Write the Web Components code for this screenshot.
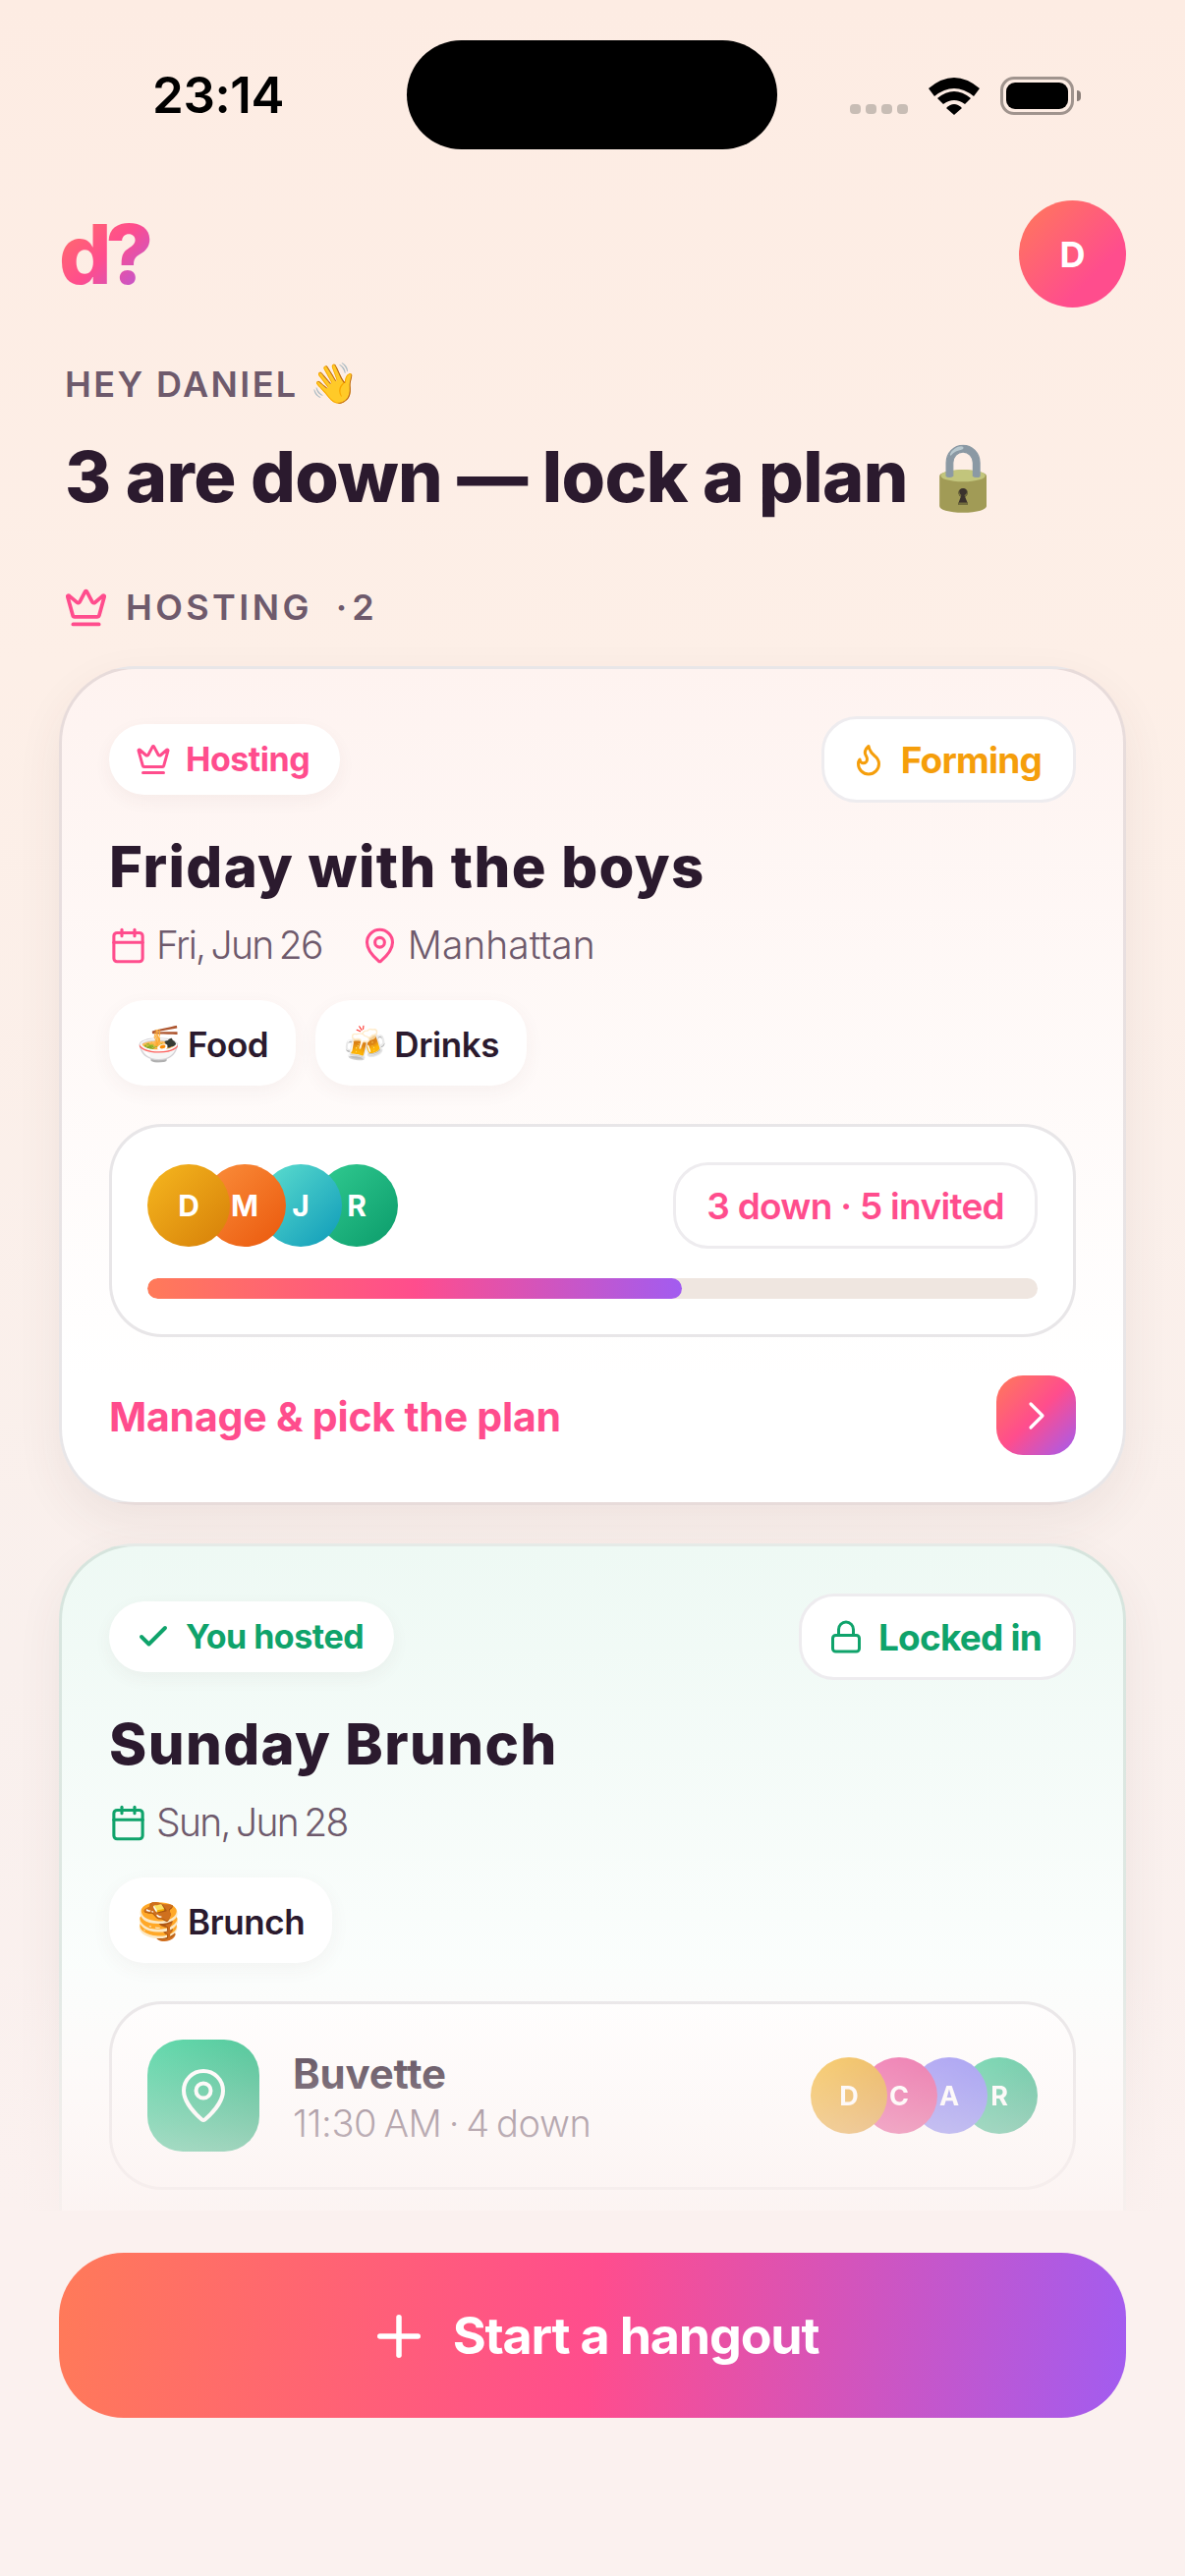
<!doctype html>
<html lang="en">
<head>
<meta charset="utf-8">
<title>d?</title>
<style>
  html, body { margin: 0; padding: 0; }
  body { font-family: Inter, "Noto Sans", sans-serif; color: #2b1a2e; background: #fbf1ef; }
</style>
</head>
<body>

<app-shell>
  <status-bar></status-bar>
  <top-header></top-header>
  <greeting-block name="HEY DANIEL" wave="👋" title="3 are down — lock a plan" emoji="🔒"></greeting-block>
  <section-label label="HOSTING" count="· 2"></section-label>

  <hangout-card>
    <badge-pill slot="left" icon="crown" tone="pink" flat>Hosting</badge-pill>
    <badge-pill slot="right" icon="flame" tone="amber">Forming</badge-pill>
    <span slot="title">Friday with the boys</span>
    <meta-item slot="meta" icon="calendar" tone="pink" tight>Fri, Jun 26</meta-item>
    <meta-item slot="meta" icon="pin" tone="pink">Manhattan</meta-item>
    <vibe-chip slot="chips" emoji="🍜">Food</vibe-chip>
    <vibe-chip slot="chips" emoji="🍻">Drinks</vibe-chip>
    <rsvp-box slot="body" summary="3 down · 5 invited" progress="60"
      people="D:#f6b71f:#d67f08,M:#fb8f3c:#ea580c,J:#5fe0cf:#0e9ab9,R:#32cc92:#0b9b6a"></rsvp-box>
    <manage-row slot="foot">Manage &amp; pick the plan</manage-row>
  </hangout-card>

  <hangout-card tone="green">
    <badge-pill slot="left" icon="check" tone="green" flat>You hosted</badge-pill>
    <badge-pill slot="right" icon="lock" tone="green">Locked in</badge-pill>
    <span slot="title">Sunday Brunch</span>
    <meta-item slot="meta" icon="calendar" tone="green" tight>Sun, Jun 28</meta-item>
    <vibe-chip slot="chips" emoji="🥞">Brunch</vibe-chip>
    <venue-box slot="body" name="Buvette" detail="11:30 AM · 4 down"
      people="D:#f6b71f:#d67f08,C:#ec4899:#db2777,A:#8b7ff5:#6366f1,R:#32cc92:#0b9b6a"></venue-box>
  </hangout-card>

  <start-button slot="footer">Start a hangout</start-button>
</app-shell>

<script>
  const GRADIENT = 'linear-gradient(135deg, #ff7a59 0%, #ff4d8d 50%, #a25cf0 100%)';
  const ICONS = {
    crown: '<path d="M11.562 3.266a.5.5 0 0 1 .876 0L15.39 8.87a1 1 0 0 0 1.516.294L21.183 5.5a.5.5 0 0 1 .798.519l-2.834 10.246a1 1 0 0 1-.956.734H5.81a1 1 0 0 1-.957-.734L2.02 6.02a.5.5 0 0 1 .798-.519l4.276 3.664a1 1 0 0 0 1.516-.294z"/><path d="M5 21h14"/>',
    flame: '<path d="M8.5 14.5A2.5 2.5 0 0 0 11 12c0-1.38-.5-2-1-3-1.072-2.143-.224-4.054 2-6 .5 2.5 2 4.9 4 6.5 2 1.6 3 3.5 3 5.5a7 7 0 1 1-14 0c0-1.153.433-2.294 1-3a2.5 2.5 0 0 0 2.5 2.5z"/>',
    calendar: '<path d="M8 2v4"/><path d="M16 2v4"/><rect x="3" y="4" width="18" height="18" rx="2"/><path d="M3 10h18"/>',
    pin: '<path d="M20 10c0 4.993-5.539 10.193-7.399 11.799a1 1 0 0 1-1.202 0C9.539 20.193 4 14.993 4 10a8 8 0 0 1 16 0"/><circle cx="12" cy="10" r="3"/>',
    check: '<path d="M20 6 9 17l-5-5"/>',
    lock: '<rect x="3" y="11" width="18" height="11" rx="2"/><path d="M7 11V7a5 5 0 0 1 10 0v4"/>',
    chevron: '<path d="m9 18 6-6-6-6"/>',
    plus: '<path d="M5 12h14"/><path d="M12 5v14"/>',
  };

  function icon(name, size, stroke) {
    return `<svg width="${size}" height="${size}" viewBox="0 0 24 24" fill="none" stroke="currentColor"
      stroke-width="${stroke || 2}" stroke-linecap="round" stroke-linejoin="round" style="flex:none;display:block">${ICONS[name]}</svg>`;
  }

  function avatars(people, size, step, fontSize) {
    return people.split(',').map((p, i, all) => {
      const [letter, from, to] = p.split(':');
      return `<span style="width:${size}px;height:${size}px;margin-left:${i ? step - size : 0}px;z-index:${all.length - i};
        background:linear-gradient(135deg, ${from}, ${to});font-size:${fontSize}px">${letter}</span>`;
    }).join('');
  }

  class Base extends HTMLElement {
    constructor() {
      super();
      this.attachShadow({ mode: 'open' });
    }
    connectedCallback() {
      this.shadowRoot.innerHTML = this.render();
    }
  }

  customElements.define('app-shell', class extends Base {
    render() {
      return `
        <style>
          :host {
            display: flex;
            flex-direction: column;
            width: 1206px;
            height: 2622px;
            overflow: hidden;
            background: #fbf1ef;
          }
          .scroll {
            position: relative;
            height: 2250px;
            flex: none;
            overflow: hidden;
            padding: 0 60px;
            box-sizing: border-box;
            background: linear-gradient(180deg, #fdece3 0%, #fdefe7 30%, #f9f0ed 75%, #fbf1ef 100%);
          }
          .fade {
            position: absolute;
            left: 0;
            right: 0;
            bottom: 0;
            height: 250px;
            background: linear-gradient(180deg, rgba(251,241,239,0) 0%, rgba(251,241,239,.8) 100%);
            pointer-events: none;
          }
          .footer { flex: 1; padding: 43px 60px 0; }
        </style>
        <div class="scroll"><slot></slot><div class="fade"></div></div>
        <div class="footer"><slot name="footer"></slot></div>
      `;
    }
  });

  customElements.define('status-bar', class extends Base {
    render() {
      return `
        <style>
          :host {
            display: flex;
            align-items: flex-start;
            height: 204px;
            margin: 0 -60px;
          }
          .time {
            width: 133px;
            margin: 71px 0 0 155px;
            font: 600 51px/52px Inter, sans-serif;
            letter-spacing: -.4px;
            color: #000;
          }
          .island {
            width: 377px;
            height: 111px;
            margin: 41px 0 0 126px;
            border-radius: 56px;
            background: #000;
          }
          .dots { display: flex; gap: 5px; margin: 106px 0 0 74px; }
          .dots i { width: 11px; height: 10px; border-radius: 4px; background: #c8bdb5; }
          .wifi { margin: 79px 0 0 21px; }
          .battery {
            position: relative;
            box-sizing: border-box;
            width: 75px;
            height: 39px;
            margin: 78px 0 0 21px;
            padding: 3px;
            border: 3px solid #a0948e;
            border-radius: 14px;
          }
          .battery i { display: block; height: 100%; border-radius: 9px; background: #000; }
          .battery b {
            position: absolute;
            left: 75px;
            top: 11px;
            width: 4px;
            height: 11px;
            border-radius: 0 4px 4px 0;
            background: #8a7e78;
          }
        </style>
        <div class="time">23:14</div>
        <div class="island"></div>
        <div class="dots"><i></i><i></i><i></i><i></i></div>
        <svg class="wifi" width="52" height="38" viewBox="0 0 52 38" fill="#000">
          <path d="M0 11Q26-11 52 11L46 19Q26 3 6 19Z"/>
          <path d="M9 21Q26 7 43 21L37 27Q26 19 15 27Z"/>
          <path d="M18 31Q26 23 34 31L26 38Z"/>
        </svg>
        <div class="battery"><i></i><b></b></div>
      `;
    }
  });

  customElements.define('top-header', class extends Base {
    render() {
      return `
        <style>
          :host { display: flex; align-items: center; justify-content: space-between; height: 109px; }
          .logo {
            font: 800 84px/109px Inter, sans-serif;
            letter-spacing: -6px;
            padding-right: 6px;
            background: ${GRADIENT};
            -webkit-background-clip: text;
            background-clip: text;
            color: transparent;
          }
          .me {
            width: 109px;
            height: 109px;
            border-radius: 50%;
            display: flex;
            align-items: center;
            justify-content: center;
            background: linear-gradient(135deg, #ff7a59, #ff4d8d 70%);
            color: #fff;
            font: 700 36px/1 Inter, sans-serif;
          }
        </style>
        <div class="logo">d?</div>
        <div class="me">D</div>
      `;
    }
  });

  customElements.define('greeting-block', class extends Base {
    render() {
      return `
        <style>
          :host { display: block; padding: 55px 0 0 6px; }
          .hey {
            font: 600 36px/44px Inter, sans-serif;
            letter-spacing: 2.4px;
            color: #6e5a6c;
          }
          .hey span { font-size: 40px; letter-spacing: 0; }
          h1 {
            margin: 29px 0 0;
            font: 800 72px/84px Inter, sans-serif;
            letter-spacing: -.6px;
            color: #2b1a2e;
            white-space: nowrap;
          }
          h1 span {
            font-size: 66px;
            letter-spacing: 0;
            vertical-align: 3px;
            filter: saturate(.45) brightness(.9) hue-rotate(12deg);
          }
        </style>
        <div class="hey">${this.getAttribute('name')} <span>${this.getAttribute('wave')}</span></div>
        <h1>${this.getAttribute('title')} <span>${this.getAttribute('emoji')}</span></h1>
      `;
    }
  });

  customElements.define('section-label', class extends Base {
    render() {
      return `
        <style>
          :host {
            display: flex;
            align-items: center;
            height: 44px;
            margin: 69px 0 38px;
            padding-left: 5px;
            font: 600 36px/44px Inter, sans-serif;
            letter-spacing: 3.4px;
            color: #6e5a6c;
          }
          svg { color: #ff4d8d; margin-right: 18px; }
          .n { margin-left: 24px; letter-spacing: -3px; word-spacing: 2px; }
        </style>
        ${icon('crown', 45)}
        <span>${this.getAttribute('label')}</span>
        <span class="n">${this.getAttribute('count')}</span>
      `;
    }
  });

  customElements.define('hangout-card', class extends Base {
    render() {
      const green = this.getAttribute('tone') === 'green';
      return `
        <style>
          :host {
            display: block;
            margin-bottom: 39px;
            padding: 48px 48px ${green ? 240 : 48}px;
            border: 3px solid ${green ? 'rgba(40,80,60,.12)' : 'rgba(43,26,46,.11)'};
            border-radius: 78px;
            background: linear-gradient(180deg, ${green ? '#eef9f4, #fff 65%' : '#fef3f0, #fff 85%'});
            box-shadow: 0 18px 48px rgba(90,50,60,.07);
          }
          .top { display: flex; align-items: center; justify-content: space-between; }
          .title {
            margin-top: 32px;
            font: 800 58px/66px Inter, sans-serif;
            letter-spacing: 1.4px;
            color: #2b1a2e;
          }
          .meta { display: flex; gap: 39px; margin-top: 23px; }
          .chips { display: flex; gap: 20px; margin-top: 32px; }
          .body { margin-top: 39px; }
        </style>
        <div class="top"><slot name="left"></slot><slot name="right"></slot></div>
        <div class="title"><slot name="title"></slot></div>
        <div class="meta"><slot name="meta"></slot></div>
        <div class="chips"><slot name="chips"></slot></div>
        <div class="body"><slot name="body"></slot></div>
        <slot name="foot"></slot>
      `;
    }
  });

  customElements.define('badge-pill', class extends Base {
    render() {
      const colors = { pink: '#ff4d8d', amber: '#f59e0b', green: '#0fa36b' };
      const flat = this.hasAttribute('flat');
      return `
        <style>
          :host {
            display: inline-flex;
            align-items: center;
            box-sizing: border-box;
            height: ${flat ? 72 : 88}px;
            padding: 0 ${flat ? 31 : 32}px 0 27px;
            gap: 15px;
            border-radius: 36px;
            background: #fff;
            ${flat ? 'box-shadow: 0 6px 18px rgba(90,50,60,.05);' : 'border: 3px solid #eeecef;'}
            color: ${colors[this.getAttribute('tone')]};
            font: 700 ${flat ? 34 : 37}px/1 Inter, sans-serif;
            letter-spacing: ${flat ? -.5 : -.8}px;
          }
        </style>
        ${icon(this.getAttribute('icon'), 36, this.getAttribute('icon') === 'check' ? 2.6 : 2)}
        <slot></slot>
      `;
    }
  });

  customElements.define('meta-item', class extends Base {
    render() {
      const color = this.getAttribute('tone') === 'green' ? '#0fa36b' : '#ff4d8d';
      const tight = this.hasAttribute('tight');
      return `
        <style>
          :host {
            display: inline-flex;
            align-items: center;
            gap: 9px;
            height: 48px;
            font: 300 39px/48px Inter, sans-serif;
            letter-spacing: ${tight ? -1.7 : 0}px;
            word-spacing: ${tight ? -3 : 0}px;
            color: #6e5a6c;
          }
          svg { color: ${color}; }
        </style>
        ${icon(this.getAttribute('icon'), 39, 1.9)}
        <slot></slot>
      `;
    }
  });

  customElements.define('vibe-chip', class extends Base {
    render() {
      return `
        <style>
          :host {
            display: inline-flex;
            align-items: center;
            gap: 7px;
            box-sizing: border-box;
            height: 87px;
            padding: 0 28px;
            border-radius: 36px;
            background: #fff;
            box-shadow: 0 6px 20px rgba(90,50,60,.05);
            font: 600 35px/1 Inter, sans-serif;
            letter-spacing: -.4px;
            color: #2b1a2e;
          }
          span { font-size: 36px; letter-spacing: 0; }
          .label { padding-top: 3px; font-size: inherit; letter-spacing: inherit; }
        </style>
        <span>${this.getAttribute('emoji')}</span>
        <div class="label"><slot></slot></div>
      `;
    }
  });

  const stackStyle = `
    .stack { display: flex; }
    .stack span {
      position: relative;
      flex: none;
      border-radius: 50%;
      display: flex;
      align-items: center;
      justify-content: center;
      color: #fff;
      font-family: Inter, sans-serif;
      font-weight: 700;
    }
  `;

  customElements.define('rsvp-box', class extends Base {
    render() {
      return `
        <style>
          :host {
            display: block;
            padding: 36px;
            border: 3px solid rgba(43,26,46,.11);
            border-radius: 54px;
            background: #fff;
          }
          ${stackStyle}
          .row { display: flex; align-items: center; justify-content: space-between; }
          .count {
            box-sizing: border-box;
            display: flex;
            align-items: center;
            height: 88px;
            padding: 0 31px;
            border: 3px solid #eeecef;
            border-radius: 36px;
            font: 600 37px/1 Inter, sans-serif;
            letter-spacing: -.7px;
            color: #ff4d8d;
          }
          .track { height: 21px; margin-top: 30px; border-radius: 11px; background: #efe6e0; overflow: hidden; }
          .fill {
            height: 100%;
            width: ${this.getAttribute('progress')}%;
            border-radius: 11px;
            background: linear-gradient(90deg, #ff7a59 0%, #ff4d8d 50%, #a25cf0 100%);
          }
        </style>
        <div class="row">
          <div class="stack">${avatars(this.getAttribute('people'), 84, 57, 30)}</div>
          <div class="count">${this.getAttribute('summary')}</div>
        </div>
        <div class="track"><div class="fill"></div></div>
      `;
    }
  });

  customElements.define('venue-box', class extends Base {
    render() {
      return `
        <style>
          :host {
            display: flex;
            align-items: center;
            padding: 36px;
            border: 3px solid rgba(43,26,46,.11);
            border-radius: 54px;
            background: #fff;
          }
          ${stackStyle}
          .stack { opacity: .86; }
          .tile {
            flex: none;
            width: 114px;
            height: 114px;
            display: flex;
            align-items: center;
            justify-content: center;
            border-radius: 36px;
            color: #fff;
            background: linear-gradient(135deg, #34d399, #0fa36b);
          }
          .text { flex: 1; margin-left: 34px; padding-top: 4px; }
          .name { font: 700 42px/48px Inter, sans-serif; letter-spacing: -.2px; color: #2b1a2e; }
          .detail { margin-top: 3px; font: 300 38px/46px Inter, sans-serif; letter-spacing: -.4px; word-spacing: -3px; color: #6e5a6c; }
        </style>
        <div class="tile">${icon('pin', 60, 1.6)}</div>
        <div class="text">
          <div class="name">${this.getAttribute('name')}</div>
          <div class="detail">${this.getAttribute('detail')}</div>
        </div>
        <div class="stack">${avatars(this.getAttribute('people'), 78, 51, 27)}</div>
      `;
    }
  });

  customElements.define('manage-row', class extends Base {
    render() {
      return `
        <style>
          :host {
            display: flex;
            align-items: center;
            justify-content: space-between;
            margin-top: 39px;
            font: 700 41px/1 Inter, sans-serif;
            letter-spacing: -.2px;
            color: #ff4d8d;
          }
          .label { padding-top: 3px; }
          .go {
            width: 81px;
            height: 81px;
            border-radius: 27px;
            display: flex;
            align-items: center;
            justify-content: center;
            color: #fff;
            background: ${GRADIENT};
          }
        </style>
        <div class="label"><slot></slot></div>
        <div class="go">${icon('chevron', 48, 1.6)}</div>
      `;
    }
  });

  customElements.define('start-button', class extends Base {
    render() {
      return `
        <style>
          :host {
            display: flex;
            align-items: center;
            justify-content: center;
            gap: 22px;
            box-sizing: border-box;
            height: 168px;
            padding-top: 2px;
            border-radius: 66px;
            background: linear-gradient(95deg, #ff7a59 0%, #ff4d8d 50%, #a25cf0 100%);
            color: #fff;
            font: 700 52px/1 Inter, sans-serif;
            letter-spacing: -1.2px;
          }
        </style>
        ${icon('plus', 66)}
        <slot></slot>
      `;
    }
  });
</script>
</body>
</html>
